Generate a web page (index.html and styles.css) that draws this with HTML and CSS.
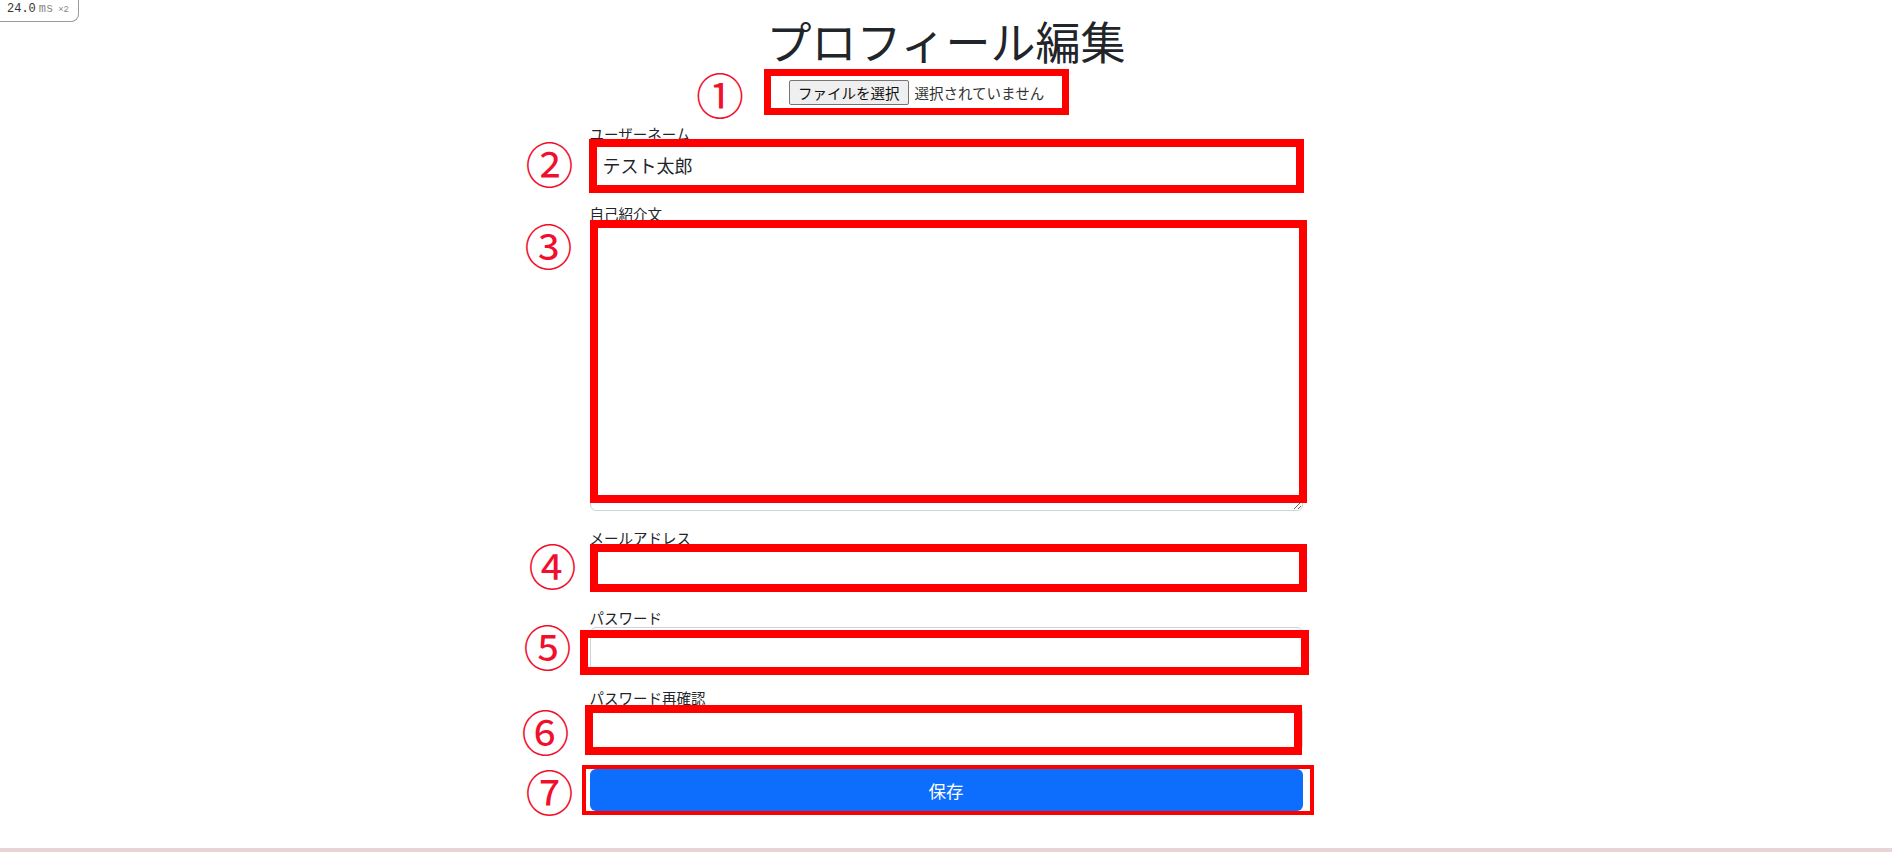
FILE: index.html
```html
<!DOCTYPE html>
<html lang="ja">
<head>
<meta charset="utf-8">
<title>プロフィール編集</title>
<link rel="stylesheet" href="styles.css">
</head>
<body>
<div class="perf"><span class="perf-num">24.0</span><span class="perf-unit">ms</span><span class="perf-x">×2</span></div>
<main class="page">
  <h1 class="title">プロフィール編集</h1>
  <div class="file-row">
    <div class="file-ctl">
      <button class="file-btn" type="button">ファイルを選択</button>
      <span class="file-name">選択されていません</span>
      <span class="hl hl1"></span>
      <span class="mark mark1">①</span>
    </div>
  </div>
  <form class="form">
    <div class="field">
      <label class="label">ユーザーネーム</label>
      <div class="ctl">
        <input class="input" type="text" value="テスト太郎">
        <span class="hl hl2"></span>
        <span class="mark mark2">②</span>
      </div>
    </div>
    <div class="field">
      <label class="label">自己紹介文</label>
      <div class="ctl">
        <textarea class="input textarea"></textarea>
        <span class="hl hl3"></span>
        <span class="mark mark3">③</span>
      </div>
    </div>
    <div class="field">
      <label class="label">メールアドレス</label>
      <div class="ctl">
        <input class="input" type="text">
        <span class="hl hl4"></span>
        <span class="mark mark4">④</span>
      </div>
    </div>
    <div class="field">
      <label class="label">パスワード</label>
      <div class="ctl">
        <input class="input" type="password">
        <span class="hl hl5"></span>
        <span class="mark mark5">⑤</span>
      </div>
    </div>
    <div class="field">
      <label class="label">パスワード再確認</label>
      <div class="ctl">
        <input class="input" type="password">
        <span class="hl hl6"></span>
        <span class="mark mark6">⑥</span>
      </div>
    </div>
    <div class="ctl">
      <button class="btn" type="button">保存</button>
      <span class="hl hl7"></span>
      <span class="mark mark7">⑦</span>
    </div>
  </form>
</main>
<div class="page-end"></div>
</body>
</html>
```

FILE: styles.css
```css
html, body {
  margin: 0;
  padding: 0;
}
body {
  min-height: 100vh;
  display: flex;
  flex-direction: column;
  background: #fff;
  font-family: "Noto Sans CJK JP", "Noto Sans", sans-serif;
  color: #212529;
  position: relative;
}
.perf {
  position: absolute;
  top: 0;
  left: 0;
  padding: 2px 9px 4px 7px;
  border-right: 1px solid #9a9a9a;
  border-bottom: 1px solid #9a9a9a;
  border-bottom-right-radius: 8px;
  background: #fff;
  font-family: "Liberation Mono", monospace;
  font-size: 12px;
  line-height: 14px;
  color: #333;
}
.perf-unit {
  color: #888;
  margin-left: 3px;
}
.perf-x {
  color: #888;
  font-size: 9px;
  margin-left: 5px;
}
.page {
  width: 713px;
  margin: 0 auto;
}
.title {
  margin: 0;
  padding-top: 14px;
  font-size: 45px;
  line-height: 54px;
  font-weight: 400;
  text-align: center;
  color: #212529;
}
.file-row {
  display: flex;
  justify-content: center;
  margin-top: 12px;
}
.file-ctl {
  position: relative;
  width: 314px;
  display: flex;
  align-items: center;
  gap: 6px;
}
.file-btn {
  height: 25px;
  padding: 0 8px;
  font-family: inherit;
  font-size: 14.5px;
  line-height: 20px;
  color: #111;
  background: #efefef;
  border: 1px solid #767676;
  border-radius: 2px;
}
.file-name {
  font-size: 14.5px;
  line-height: 20px;
  color: #333;
}
.form {
  margin-top: 20px;
}
.field {
  margin-bottom: 18px;
}
.label {
  display: block;
  font-size: 14.5px;
  line-height: 18px;
  color: #212529;
}
.ctl {
  position: relative;
}
.input {
  display: block;
  width: 100%;
  height: 44px;
  box-sizing: border-box;
  margin: 0;
  padding: 0 12px;
  border: 1px solid #ced4da;
  border-radius: 6px;
  background: #fff;
  font-family: inherit;
  font-size: 18px;
  color: #212529;
}
.textarea {
  height: 288px;
  padding: 6px 12px;
  resize: vertical;
}
.btn {
  display: block;
  width: 100%;
  height: 42px;
  border: none;
  border-radius: 6px;
  background: #0d6efd;
  color: #fff;
  font-family: inherit;
  font-size: 17.5px;
}
.hl {
  position: absolute;
  box-sizing: border-box;
  border: 8px solid #ff0000;
  pointer-events: none;
}
.hl1 { left: -25px; top: -11px; width: 305px; height: 46px; border-width: 7px; }
.hl2 { left: -1px; top: -4px; width: 715px; height: 54px; }
.hl3 { left: 0; top: -3px; width: 717px; height: 283px; }
.hl4 { left: 0; top: -3px; width: 717px; height: 48px; }
.hl5 { left: -10px; top: 3px; width: 729px; height: 45px; }
.hl6 { left: -5px; top: -2px; width: 717px; height: 50px; }
.hl7 { left: -8px; top: -4px; width: 732px; height: 50px; border-width: 4px; }
.mark {
  position: absolute;
  width: 48px;
  font-size: 48px;
  line-height: 48px;
  text-align: center;
  color: #f0102d;
}
.mark1 { left: -93px; top: -11px; }
.mark2 { left: -64px; top: -5px; }
.mark3 { left: -65px; top: -3px; }
.mark4 { left: -61px; top: -7px; }
.mark5 { left: -66px; top: -6px; }
.mark6 { left: -68px; top: -1px; }
.mark7 { left: -64px; top: -3px; }
.page-end {
  margin-top: auto;
  height: 4px;
  background: #e6d4d6;
}
```
